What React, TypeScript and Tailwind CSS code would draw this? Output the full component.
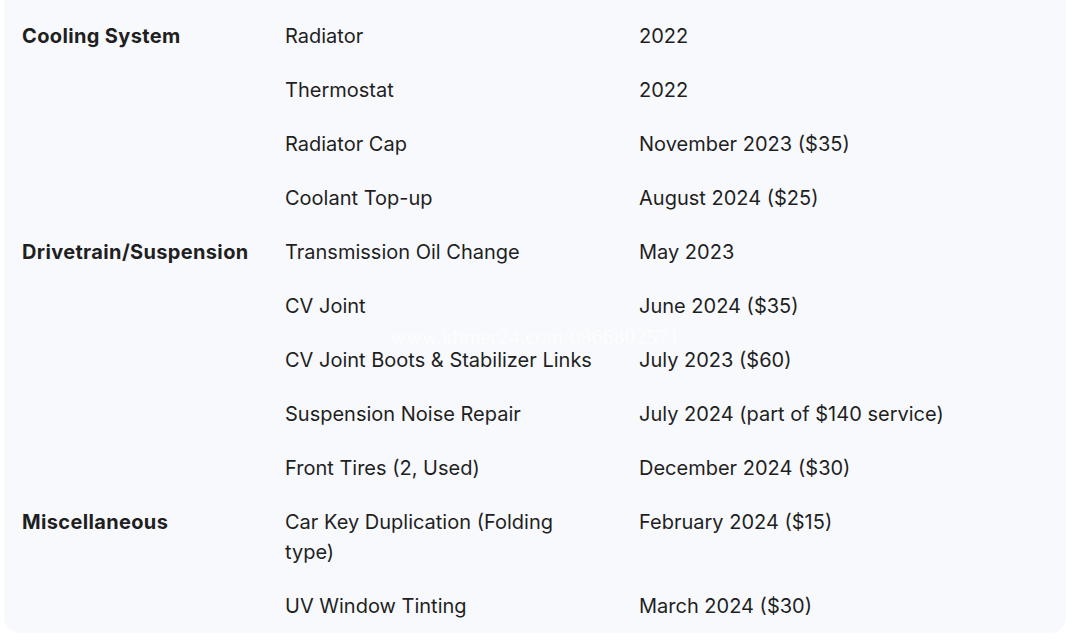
const groups: { name: string; items: [string, string][] }[] = [
  {
    name: 'Cooling System',
    items: [
      ['Radiator', '2022'],
      ['Thermostat', '2022'],
      ['Radiator Cap', 'November 2023 ($35)'],
      ['Coolant Top-up', 'August 2024 ($25)'],
    ],
  },
  {
    name: 'Drivetrain/Suspension',
    items: [
      ['Transmission Oil Change', 'May 2023'],
      ['CV Joint', 'June 2024 ($35)'],
      ['CV Joint Boots & Stabilizer Links', 'July 2023 ($60)'],
      ['Suspension Noise Repair', 'July 2024 (part of $140 service)'],
      ['Front Tires (2, Used)', 'December 2024 ($30)'],
    ],
  },
  {
    name: 'Miscellaneous',
    items: [
      ['Car Key Duplication (Folding type)', 'February 2024 ($15)'],
      ['UV Window Tinting', 'March 2024 ($30)'],
    ],
  },
];

export default function App() {
  return (
    <div className="w-[1072px] h-[642px] bg-white overflow-hidden font-['Inter',sans-serif] text-[#1f1f1f]">
      <div className="relative ml-[4px] w-[1062px] bg-[#f8f9fd] rounded-b-2xl pt-[9px]">
        <table className="w-full border-collapse table-fixed text-[20px] leading-[30px]">
          <colgroup>
            <col className="w-[263px]" />
            <col className="w-[354px]" />
            <col />
          </colgroup>
          <tbody>
            {groups.map((g) =>
              g.items.map(([item, date], i) => (
                <tr key={g.name + item}>
                  <td className="px-[18px] py-[12px] align-top font-bold tracking-[0.35px]">
                    {i === 0 ? g.name : ''}
                  </td>
                  <td className="px-[18px] py-[12px] align-top">{item}</td>
                  <td className="px-[18px] py-[12px] align-top">{date}</td>
                </tr>
              ))
            )}
          </tbody>
        </table>
        <div className="absolute left-[386px] top-[320px] font-['Liberation_Serif',serif] text-[22px] text-white/70 pointer-events-none">
          www.khmer24.com/0966802571
        </div>
      </div>
    </div>
  );
}
